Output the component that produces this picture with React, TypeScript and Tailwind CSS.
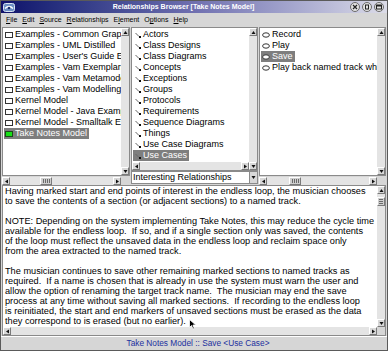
import React from "react";

type Dir = "up" | "down" | "left" | "right";

function Tri({ dir }: { dir: Dir }) {
  const pts = {
    up: "0.5,4 2.5,1 4.5,4",
    down: "0.5,1 2.5,4 4.5,1",
    left: "4,0.5 1,2.5 4,4.5",
    right: "1,0.5 4,2.5 1,4.5",
  }[dir];
  return (
    <svg width="5" height="5" viewBox="0 0 5 5">
      <polygon points={pts} fill="#111" />
    </svg>
  );
}

function Btn({ dir }: { dir: Dir }) {
  return (
    <div className="w-[8px] h-[8px] shrink-0 flex items-center justify-center bg-[#d8d8d8] border border-t-white border-l-white border-b-[#7a7a7a] border-r-[#7a7a7a]">
      <Tri dir={dir} />
    </div>
  );
}

function Grip({ vertical }: { vertical?: boolean }) {
  return vertical ? (
    <div className="w-[8px] h-[9px] shrink-0 bg-[#cfcfcf] border border-t-white border-l-white border-b-[#7a7a7a] border-r-[#7a7a7a] flex flex-col items-center justify-center gap-[1px]">
      <div className="w-[4px] h-px bg-[#6a6a6a]" />
      <div className="w-[4px] h-px bg-[#6a6a6a]" />
      <div className="w-[4px] h-px bg-[#6a6a6a]" />
    </div>
  ) : (
    <div className="h-[8px] w-[12px] shrink-0 bg-[#cfcfcf] border border-t-white border-l-white border-b-[#7a7a7a] border-r-[#7a7a7a] flex items-center justify-center gap-[1px]">
      <div className="h-[4px] w-px bg-[#6a6a6a]" />
      <div className="h-[4px] w-px bg-[#6a6a6a]" />
      <div className="h-[4px] w-px bg-[#6a6a6a]" />
      <div className="h-[4px] w-px bg-[#6a6a6a]" />
    </div>
  );
}

function VScroll({ thumb }: { thumb?: number }) {
  return (
    <div className="w-[8px] shrink-0 flex flex-col bg-[#e4e4e4]">
      <Btn dir="up" />
      <div className="flex-1 flex flex-col">
        {thumb !== undefined && (
          <>
            <div style={{ height: thumb }} />
            <Grip vertical />
          </>
        )}
      </div>
      <Btn dir="down" />
    </div>
  );
}

function HScroll({ thumb }: { thumb?: number }) {
  return (
    <div className="h-[8px] flex-1 min-w-0 flex bg-[#e4e4e4]">
      <Btn dir="left" />
      <div className="flex-1 flex">
        {thumb !== undefined && (
          <>
            <div style={{ width: thumb }} />
            <Grip />
          </>
        )}
      </div>
      <Btn dir="right" />
    </div>
  );
}

function BoxIcon({ green }: { green?: boolean }) {
  return (
    <svg width="8" height="6" viewBox="0 0 8 6" className="shrink-0 mr-[2px]">
      <rect x="0.5" y="0.5" width="7" height="5" fill={green ? "#18e018" : "white"} stroke={green ? "#1a4a1a" : "#333"} strokeWidth="1" />
    </svg>
  );
}

function RelIcon() {
  return (
    <svg width="8" height="8" viewBox="0 0 8 8" className="shrink-0 mr-[1px]">
      <line x1="1.5" y1="2" x2="5" y2="5.5" stroke="#666" strokeWidth="1" />
      <rect x="5" y="5" width="2" height="2" fill="#111" />
    </svg>
  );
}

function OvalIcon() {
  return (
    <svg width="8" height="6" viewBox="0 0 8 6" className="shrink-0 mr-[2px]">
      <ellipse cx="4" cy="3" rx="3.4" ry="2.2" fill="white" stroke="#333" strokeWidth="1" />
    </svg>
  );
}

function Item({ icon, text, sel }: { icon: React.ReactNode; text: string; sel?: boolean }) {
  return (
    <div className="h-[11px] flex items-center pl-[1px]">
      <div className={"flex items-center h-[11px] pr-[2px] pl-[1px] whitespace-nowrap " + (sel ? "bg-[#7e7e7e] text-white" : "")}>
        {icon}
        <span className="text-[9px] leading-[11px]">{text}</span>
      </div>
    </div>
  );
}

const leftItems = [
  "Examples - Common Graphics",
  "Examples - UML Distilled",
  "Examples - User's Guide Examples",
  "Examples - Vam Exemplars",
  "Examples - Vam Metamodel",
  "Examples - Vam Modelling",
  "Kernel Model",
  "Kernel Model - Java Examples",
  "Kernel Model - Smalltalk Examples",
];

const midItems = [
  "Actors",
  "Class Designs",
  "Class Diagrams",
  "Concepts",
  "Exceptions",
  "Groups",
  "Protocols",
  "Requirements",
  "Sequence Diagrams",
  "Things",
  "Use Case Diagrams",
];

const textLines = [
  "Having marked start and end points of interest in the endless loop, the musician chooses",
  "to save the contents of a section (or adjacent sections) to a named track.",
  "",
  "NOTE: Depending on the system implementing Take Notes, this may reduce the cycle time",
  "available for the endless loop.  If so, and if a single section only was saved, the contents",
  "of the loop must reflect the unsaved data in the endless loop and reclaim space only",
  "from the area extracted to the named track.",
  "",
  "The musician continues to save other remaining marked sections to named tracks as",
  "required.  If a name is chosen that is already in use the system must warn the user and",
  "allow the option of renaming the target track name.  The musician may end the save",
  "process at any time without saving all marked sections.  If recording to the endless loop",
  "is reinitiated, the start and end markers of unsaved sections must be erased as the data",
  "they correspond to is erased (but no earlier).",
];

function U({ c }: { c: string }) {
  return <span className="underline underline-offset-1">{c}</span>;
}

function WinBtn({ children }: { children: React.ReactNode }) {
  return (
    <div className="w-[10px] h-[10px] rounded-full bg-[#e2e2e2] border border-[#6a6a6a] flex items-center justify-center">
      {children}
    </div>
  );
}

export default function App() {
  return (
    <div className="w-[388px] h-[351px] flex flex-col bg-[#d6d6d6] border border-[#5a5a5a] overflow-hidden font-['Liberation_Sans',Arial,sans-serif] text-black relative">
      {/* title bar */}
      <div className="h-[12px] shrink-0 flex items-center bg-linear-to-r from-[#10106a] via-[#7070b0] to-[#dcdce8]">
        <div className="w-[16px] pl-[2px] flex items-center">
          <svg width="12" height="9" viewBox="0 0 12 9">
            <rect x="0.5" y="0.5" width="11" height="8" rx="2" fill="#6d8fc4" stroke="#d8e4f4" />
            <path d="M2 5.5 Q6 1.5 10 5.5" fill="none" stroke="white" strokeWidth="1.4" />
            <circle cx="6" cy="5" r="1.2" fill="#1a2a6a" />
          </svg>
        </div>
        <div className="flex-1 text-center text-white font-bold text-[7px] leading-[12px] whitespace-nowrap">
          Relationships Browser [Take Notes Model]
        </div>
        <div className="flex items-center gap-[2px] pr-[3px]">
          <WinBtn>
            <svg width="6" height="6" viewBox="0 0 6 6"><path d="M1 1 L5 5 M5 1 L1 5" stroke="#222" strokeWidth="1.2" /></svg>
          </WinBtn>
          <WinBtn>
            <svg width="6" height="6" viewBox="0 0 6 6"><rect x="1.5" y="1" width="3" height="4" fill="none" stroke="#222" /></svg>
          </WinBtn>
          <WinBtn>
            <svg width="6" height="6" viewBox="0 0 6 6"><rect x="0.5" y="1" width="5" height="4" fill="none" stroke="#222" /><rect x="0.5" y="1" width="5" height="1.5" fill="#222" /></svg>
          </WinBtn>
        </div>
      </div>

      {/* menu bar */}
      <div className="h-[14px] shrink-0 flex items-center gap-[5px] pl-[5px] text-[7px] leading-[14px] whitespace-nowrap">
        <span><U c="F" />ile</span>
        <span><U c="E" />dit</span>
        <span><U c="S" />ource</span>
        <span><U c="R" />elationships</span>
        <span>E<U c="l" />ement</span>
        <span>O<U c="p" />tions</span>
        <span><U c="H" />elp</span>
      </div>

      {/* panes */}
      <div className="h-[158px] shrink-0 flex gap-[1px] px-[1px]">
        {/* left */}
        <div className="w-[128px] shrink-0 flex flex-col">
          <div className="flex-1 flex border border-[#8a8a8a] min-h-0">
            <div className="flex-1 min-w-0 bg-white overflow-hidden pt-[1px]">
              {leftItems.map((t) => (
                <Item key={t} icon={<BoxIcon />} text={t} />
              ))}
              <Item icon={<BoxIcon green />} text="Take Notes Model" sel />
            </div>
            <VScroll />
          </div>
          <div className="h-[9px] flex pt-[1px]">
            <HScroll thumb={30} />
            <div className="w-[9px]" />
          </div>
        </div>

        {/* middle */}
        <div className="w-[127px] shrink-0 flex flex-col">
          <div className="flex-1 flex border border-[#8a8a8a] min-h-0">
            <div className="flex-1 min-w-0 flex flex-col">
              <div className="flex-1 bg-white overflow-hidden pt-[1px]">
                {midItems.map((t) => (
                  <Item key={t} icon={<RelIcon />} text={t} />
                ))}
                <Item icon={<RelIcon />} text="Use Cases" sel />
              </div>
              <div className="h-[8px] flex">
                <HScroll />
              </div>
            </div>
            <VScroll />
          </div>
          <div className="h-[13px] flex bg-white border border-[#8a8a8a] mb-[1px]">
            <div className="flex-1 min-w-0 text-[9px] leading-[11px] pl-[1px] whitespace-nowrap overflow-hidden">
              Interesting Relationships
            </div>
            <div className="w-[8px] flex items-center justify-center bg-[#d8d8d8] border-l border-[#8a8a8a]">
              <Tri dir="down" />
            </div>
          </div>
        </div>

        {/* right */}
        <div className="flex-1 min-w-0 flex flex-col">
          <div className="flex-1 flex border border-[#8a8a8a] min-h-0">
            <div className="flex-1 min-w-0 bg-white overflow-hidden pt-[1px]">
              <Item icon={<OvalIcon />} text="Record" />
              <Item icon={<OvalIcon />} text="Play" />
              <Item icon={<OvalIcon />} text="Save" sel />
              <Item icon={<OvalIcon />} text="Play back named track while recording" />
            </div>
            <VScroll />
          </div>
          <div className="h-[9px] flex pt-[1px]">
            <HScroll thumb={22} />
            <div className="w-[9px]" />
          </div>
        </div>
      </div>

      {/* text area */}
      <div className="h-[151px] shrink-0 flex mx-[1px] border border-[#8a8a8a]">
        <div className="flex-1 min-w-0 flex flex-col">
          <div className="flex-1 bg-white overflow-hidden pl-[2px]">
            {textLines.map((l, i) => (
              <div key={i} className="h-[10px] text-[9.2px] leading-[10px] whitespace-pre">
                {l}
              </div>
            ))}
          </div>
          <div className="h-[8px] flex">
            <Btn dir="left" />
            <div className="flex-1 bg-[#e4e4e4]" />
            <Btn dir="right" />
          </div>
        </div>
        <div className="w-[8px] flex flex-col bg-[#e4e4e4]">
          <Btn dir="up" />
          <div className="flex-1 flex flex-col">
            <div className="h-[3px]" />
            <Grip vertical />
          </div>
          <Btn dir="down" />
          <div className="h-[8px] bg-[#d6d6d6]" />
        </div>
      </div>

      {/* status bar */}
      <div className="flex-1 flex items-center justify-center pl-[8px] text-[8.3px] text-[#22309e] whitespace-nowrap border-t border-white">
        Take Notes Model :: Save &lt;Use Case&gt;
      </div>

      {/* mouse cursor */}
      <svg className="absolute left-[188px] top-[318px]" width="8" height="11" viewBox="0 0 8 11">
        <path d="M0.5 0.5 L0.5 8.5 L2.5 6.5 L4 10 L5.3 9.4 L3.9 6 L6.8 6 Z" fill="#000" stroke="#fff" strokeWidth="0.8" />
      </svg>
    </div>
  );
}
